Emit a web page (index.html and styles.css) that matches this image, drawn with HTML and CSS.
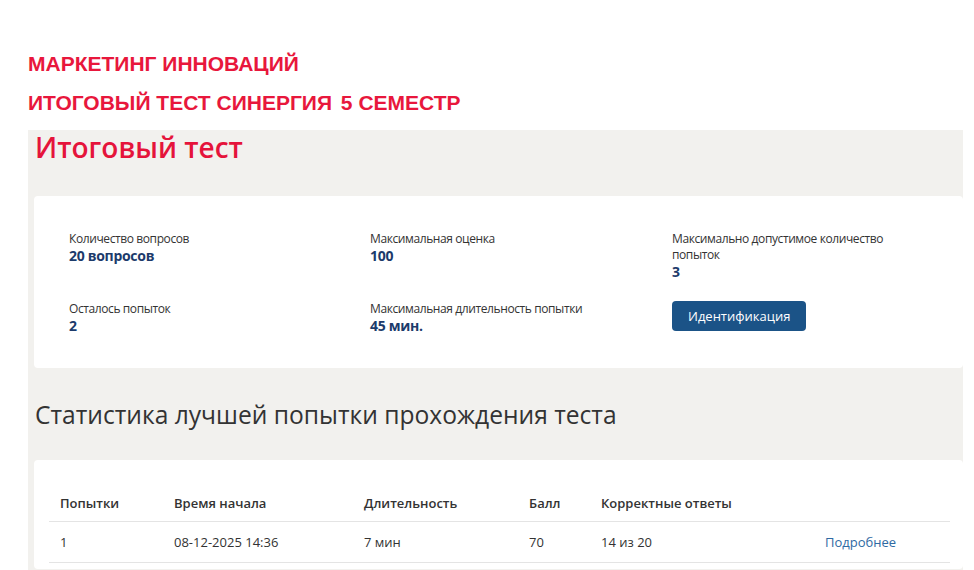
FILE: index.html
```html
<!DOCTYPE html>
<html lang="ru">

<head>
    <meta charset="UTF-8">
    <title>Итоговый тест</title>
    <link rel="stylesheet" href="styles.css">
</head>

<body>
    <div class="course">
        <p class="course-line">МАРКЕТИНГ ИННОВАЦИЙ</p>
        <p class="course-line">ИТОГОВЫЙ ТЕСТ СИНЕРГИЯ <span class="gap">5</span> СЕМЕСТР</p>
    </div>

    <div class="panel">
        <h1 class="test-title">Итоговый тест</h1>

        <div class="card info">
            <div class="info-item">
                <div class="info-label">Количество вопросов</div>
                <div class="info-value">20 вопросов</div>
            </div>
            <div class="info-item">
                <div class="info-label">Максимальная оценка</div>
                <div class="info-value">100</div>
            </div>
            <div class="info-item">
                <div class="info-label">Максимально допустимое количество попыток</div>
                <div class="info-value">3</div>
            </div>
            <div class="info-item">
                <div class="info-label">Осталось попыток</div>
                <div class="info-value">2</div>
            </div>
            <div class="info-item">
                <div class="info-label">Максимальная длительность попытки</div>
                <div class="info-value">45 мин.</div>
            </div>
            <div class="info-item">
                <button class="btn">Идентификация</button>
            </div>
        </div>

        <h2 class="stats-title">Статистика лучшей попытки прохождения теста</h2>

        <div class="card stats">
            <table class="stats-table">
                <thead>
                    <tr>
                        <th class="col-try">Попытки</th>
                        <th class="col-start">Время начала</th>
                        <th class="col-dur">Длительность</th>
                        <th class="col-score">Балл</th>
                        <th class="col-correct">Корректные ответы</th>
                        <th></th>
                    </tr>
                </thead>
                <tbody>
                    <tr>
                        <td>1</td>
                        <td>08-12-2025 14:36</td>
                        <td>7 мин</td>
                        <td>70</td>
                        <td>14 из 20</td>
                        <td><a href="#">Подробнее</a></td>
                    </tr>
                </tbody>
            </table>
        </div>
    </div>
</body>

</html>
```

FILE: styles.css
```css
* {
    margin: 0;
    padding: 0;
    box-sizing: border-box;
}

body {
    background: #fff;
    font-family: "Open Sans", "Noto Sans", sans-serif;
    color: #333;
}

.course {
    padding: 52px 0 0 28px;
}

.course-line {
    font-family: "Liberation Sans", Arial, sans-serif;
    font-weight: bold;
    font-size: 21px;
    line-height: 24px;
    color: #e8173c;
    margin-bottom: 15px;
}

.course-line:last-child {
    margin-bottom: 0;
}

.course-line .gap {
    margin-left: 3px;
}

.panel {
    margin: 15px 0 0 28px;
    width: 935px;
    min-height: 440px;
    background: #f2f1ee;
    padding-left: 6px;
}

.test-title {
    font-size: 28px;
    line-height: 34px;
    font-weight: 600;
    color: #e5143b;
    padding-left: 1px;
}

.card {
    background: #fff;
    border-radius: 4px;
}

.info {
    margin-top: 32px;
    padding: 35px 0 34px 35px;
    display: grid;
    grid-template-columns: 301px 302px 235px;
    row-gap: 21px;
}

.info-label {
    font-size: 12px;
    line-height: 16px;
    letter-spacing: -0.4px;
    color: #333;
}

.info-value {
    font-size: 14px;
    line-height: 17px;
    letter-spacing: -0.3px;
    font-weight: bold;
    color: #1c3b6b;
}

.btn {
    font-family: inherit;
    font-size: 13px;
    line-height: 20px;
    color: #fff;
    background: #1b5387;
    border: none;
    border-radius: 4px;
    height: 30px;
    padding: 0 16px;
}

.stats-title {
    margin-top: 32px;
    padding-left: 1px;
    font-size: 24.6px;
    line-height: 30px;
    font-weight: 400;
    color: #333;
}

.stats {
    margin-top: 30px;
    padding: 25px 13px 6px 15px;
}

.stats-table {
    width: 901px;
    border-collapse: collapse;
    font-size: 13px;
    line-height: 20px;
    text-align: left;
}

.stats-table th {
    font-weight: 600;
    padding: 8px 11px;
    border-bottom: 1px solid #e4e4e4;
}

.stats-table td {
    padding: 10px 11px;
    border-bottom: 1px solid #e4e4e4;
}

.col-try {
    width: 114px;
}

.col-start {
    width: 190px;
}

.col-dur {
    width: 165px;
}

.col-score {
    width: 72px;
}

.col-correct {
    width: 224px;
}

.stats-table a {
    color: #2f6aa3;
    text-decoration: none;
}
```
